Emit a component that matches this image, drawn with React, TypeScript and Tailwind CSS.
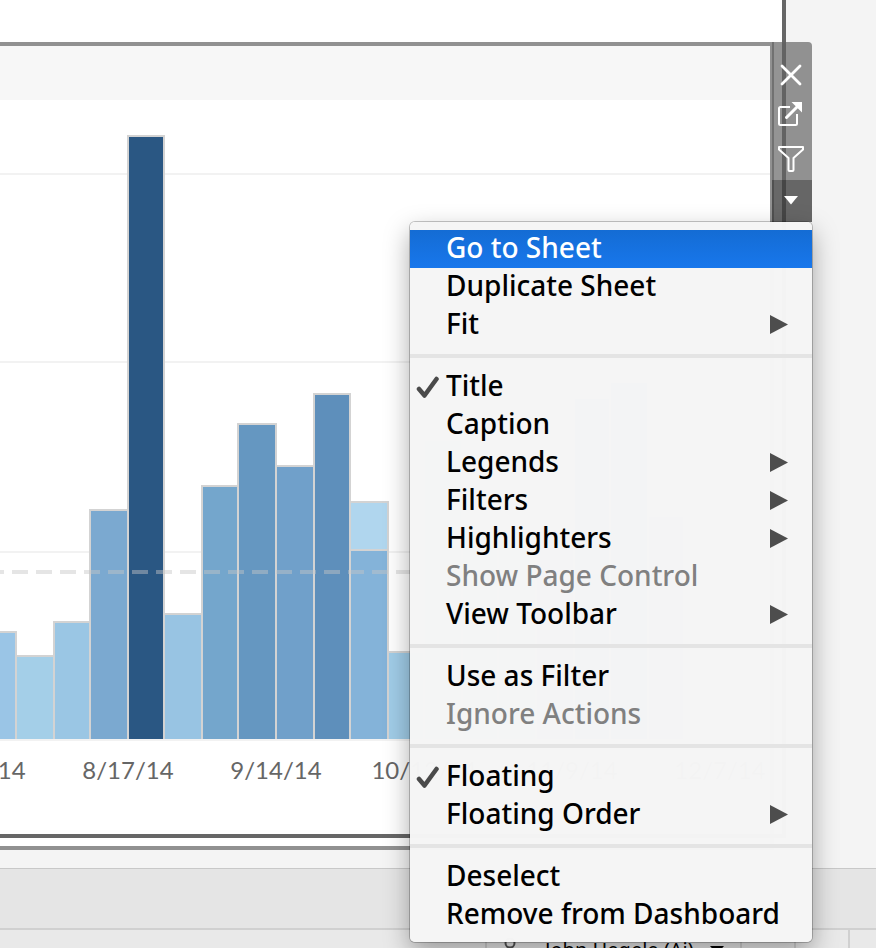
import type { ReactNode } from "react";

type Bar = { x: number; w: number; top: number; fill: string; split?: { top: number; fill: string } };

const BASE = 639;

const bars: Bar[] = [
  { x: -22, w: 38, top: 532, fill: "#9ac5e6" },
  { x: 16, w: 38, top: 556, fill: "#a4cfe8" },
  { x: 54, w: 36, top: 522, fill: "#9ac6e4" },
  { x: 90, w: 38, top: 410, fill: "#7ba9d0" },
  { x: 128, w: 36, top: 36, fill: "#2a5783" },
  { x: 164, w: 38, top: 514, fill: "#98c4e3" },
  { x: 202, w: 36, top: 386, fill: "#74a6cc" },
  { x: 238, w: 38, top: 324, fill: "#6597c1" },
  { x: 276, w: 38, top: 366, fill: "#70a0ca" },
  { x: 314, w: 36, top: 294, fill: "#5e8fbb" },
  { x: 350, w: 38, top: 402, fill: "#b0d6ee", split: { top: 450, fill: "#84b3d9" } },
  { x: 388, w: 36, top: 552, fill: "#a1cde8" },
  { x: 424, w: 38, top: 340, fill: "#a4cfe8" },
  { x: 462, w: 36, top: 430, fill: "#98c4e3" },
  { x: 498, w: 38, top: 440, fill: "#98c4e3" },
  { x: 536, w: 38, top: 430, fill: "#84b3d9" },
  { x: 574, w: 36, top: 298, fill: "#74a6cc" },
  { x: 610, w: 38, top: 282, fill: "#6597c1" },
  { x: 648, w: 36, top: 416, fill: "#84b3d9" },
];

const dates = ["7/20/14", "8/17/14", "9/14/14", "10/12/14", "11/9/14", "12/7/14"];

function Chart() {
  return (
    <svg className="block h-[642px] w-full" role="img" aria-label="Weekly bar chart" shapeRendering="crispEdges">
      {[74, 262, 452, 640].map((y) => (
        <line key={y} x1="0" x2="100%" y1={y} y2={y} stroke="#f2f2f2" strokeWidth="2" />
      ))}
      {bars.map((b) => (
        <g key={b.x}>
          <rect x={b.x} y={b.top} width={b.w} height={BASE - b.top} fill={b.fill} />
          {b.split && (
            <>
              <rect x={b.x} y={b.split.top} width={b.w} height={BASE - b.split.top} fill={b.split.fill} />
              <line x1={b.x} x2={b.x + b.w} y1={b.split.top} y2={b.split.top} stroke="#d3d3d3" strokeWidth="2" />
            </>
          )}
          <path
            d={`M${b.x} ${BASE}V${b.top}H${b.x + b.w}V${BASE}`}
            fill="none"
            stroke="#d3d3d3"
            strokeWidth="2"
          />
        </g>
      ))}
      <line x1="-12" x2="100%" y1="472" y2="472" stroke="#c6c6c6" strokeOpacity="0.45" strokeWidth="4" strokeDasharray="16 8" />
    </svg>
  );
}

function ToolButton({ label, active, children }: { label: string; active?: boolean; children: ReactNode }) {
  return (
    <button
      type="button"
      aria-label={label}
      className={`block h-[42px] w-10 ${active ? "bg-[#3e3e3e]/78" : ""}`}
    >
      <svg viewBox="0 0 40 42" className="h-[42px] w-10" fill="none" stroke="#fff">
        {children}
      </svg>
    </button>
  );
}

type Item = { label: string; sub?: boolean; checked?: boolean; disabled?: boolean; selected?: boolean };

const groups: Item[][] = [
  [{ label: "Go to Sheet", selected: true }, { label: "Duplicate Sheet" }, { label: "Fit", sub: true }],
  [
    { label: "Title", checked: true },
    { label: "Caption" },
    { label: "Legends", sub: true },
    { label: "Filters", sub: true },
    { label: "Highlighters", sub: true },
    { label: "Show Page Control", disabled: true },
    { label: "View Toolbar", sub: true },
  ],
  [{ label: "Use as Filter" }, { label: "Ignore Actions", disabled: true }],
  [{ label: "Floating", checked: true }, { label: "Floating Order", sub: true }],
  [{ label: "Deselect" }, { label: "Remove from Dashboard" }],
];

function MenuRow({ item }: { item: Item }) {
  const tone = item.selected
    ? "bg-linear-to-b from-[#146cd4] to-[#1877ec] text-white"
    : item.disabled
      ? "text-[#808080]"
      : "text-black";
  return (
    <button
      type="button"
      role={item.checked ? "menuitemcheckbox" : "menuitem"}
      aria-checked={item.checked}
      disabled={item.disabled}
      className={`flex h-[38px] w-full items-center pr-6 text-left ${tone}`}
    >
      <span className="flex w-9 shrink-0 justify-center">
        {item.checked && (
          <svg viewBox="0 0 24 24" className="h-6 w-6" fill="none" stroke="#4a4a4a">
            <path d="M3 14 8.500 20.500 20.500 4" strokeLinecap="round" strokeLinejoin="round" strokeWidth="4.500" />
          </svg>
        )}
      </span>
      <span className="grow pb-1 whitespace-nowrap">{item.label}</span>
      {item.sub && (
        <svg viewBox="0 0 18 20" className="h-5 w-[18px] shrink-0">
          <path d="M0 0 18 9.500 0 19Z" fill="#4d4d4d" />
        </svg>
      )}
    </button>
  );
}

function ContextMenu() {
  return (
    <div
      role="menu"
      className="absolute top-[222px] right-16 w-[402px] rounded-[5px] bg-[#f5f5f5]/99 py-2 font-['Noto_Sans',sans-serif] text-[28px] leading-[34px] font-medium shadow-[0_0_0_1px_rgba(0,0,0,0.22),0_10px_26px_rgba(0,0,0,0.34)]"
    >
      {groups.map((group, i) => (
        <div key={group[0].label}>
          {i > 0 && <div role="separator" className="my-[10px] h-1 bg-[#e4e4e4]" />}
          {group.map((item) => (
            <MenuRow key={item.label} item={item} />
          ))}
        </div>
      ))}
    </div>
  );
}

function StatusBar() {
  return (
    <footer className="flex grow flex-col border-t border-[#c8c8c8] bg-[#e5e5e5]">
      <div className="h-[59px] shrink-0" />
      <div className="flex grow justify-end overflow-hidden border-t-2 border-[#d0d0d0] bg-[#e9e9e9]">
        <div className="flex h-10 w-[255px] items-center border-l-2 border-[#d0d0d0] pl-4 font-['Noto_Sans',sans-serif] text-[20px] whitespace-nowrap text-black">
          <svg viewBox="0 0 14 24" className="mr-7 h-6 w-3.5" fill="none" stroke="#555" strokeWidth="2">
            <circle cx="7" cy="5" r="4.5" />
            <path d="M1 22c0-7 12-7 12 0" />
          </svg>
          <span>John Hegele (Aj)</span>
          <svg viewBox="0 0 14 8" className="ml-4 h-2 w-3.5 shrink-0">
            <path d="M0 0H14L7 8Z" />
          </svg>
        </div>
        <div className="w-[54px] border-l-2 border-[#d0d0d0]" />
        <div className="w-[54px] border-l-2 border-[#d0d0d0]" />
        <div className="w-7 border-l-2 border-[#d0d0d0]" />
      </div>
    </footer>
  );
}

export default function App() {
  return (
    <div className="relative flex h-screen flex-col overflow-hidden bg-[#f4f4f4]">
      <main className="relative h-[868px] shrink-0">
        <div className="mr-[90px] h-[838px] bg-white" />
        <section className="absolute top-[42px] right-[102px] left-0 border-y-4 border-r-4 border-[#919191] bg-white">
          <header className="h-[54px] bg-[#f7f7f7]" />
          <Chart />
          <div className="h-[104px] overflow-hidden pt-3">
            <div className="-ml-[94px] flex font-['Lato',sans-serif] text-[24px] leading-8 text-[#666]">
              {dates.map((d) => (
                <span key={d} className="w-[148px] shrink-0 text-center">
                  {d}
                </span>
              ))}
            </div>
          </div>
        </section>
        <div className="pointer-events-none absolute top-0 right-[90px] left-0 h-[838px] border-r-4 border-b-4 border-[#666]" />
        <div className="absolute top-[42px] right-16 overflow-hidden rounded-tr-[4px]">
          <div className="bg-[#626262]/68 pt-3">
            <ToolButton label="Remove">
              <path d="M10 12 28 30M28 12 10 30" strokeWidth="2.8" strokeLinecap="round" />
            </ToolButton>
            <ToolButton label="Go to sheet">
              <path d="M18 11H8.500Q7 11 7 12.500V27.500Q7 29 8.500 29H23.500Q25 29 25 27.500V18" strokeWidth="2" />
              <path d="M14.500 21.500 26 10" strokeWidth="3" strokeLinecap="round" />
              <path d="M19.500 6H30V16.500Z" fill="#fff" stroke="none" />
            </ToolButton>
            <ToolButton label="Use as filter">
              <path
                d="M7 9H31V11.500L21.500 20V32Q21.500 33 20.500 33H17.500Q16.500 33 16.500 32V20L7 11.500Z"
                strokeWidth="2"
                strokeLinejoin="round"
              />
            </ToolButton>
          </div>
          <ToolButton label="More options" active>
            <path d="M12 16H26L19 24.500Z" fill="#fff" stroke="none" />
          </ToolButton>
        </div>
      </main>
      <StatusBar />
      <ContextMenu />
    </div>
  );
}
